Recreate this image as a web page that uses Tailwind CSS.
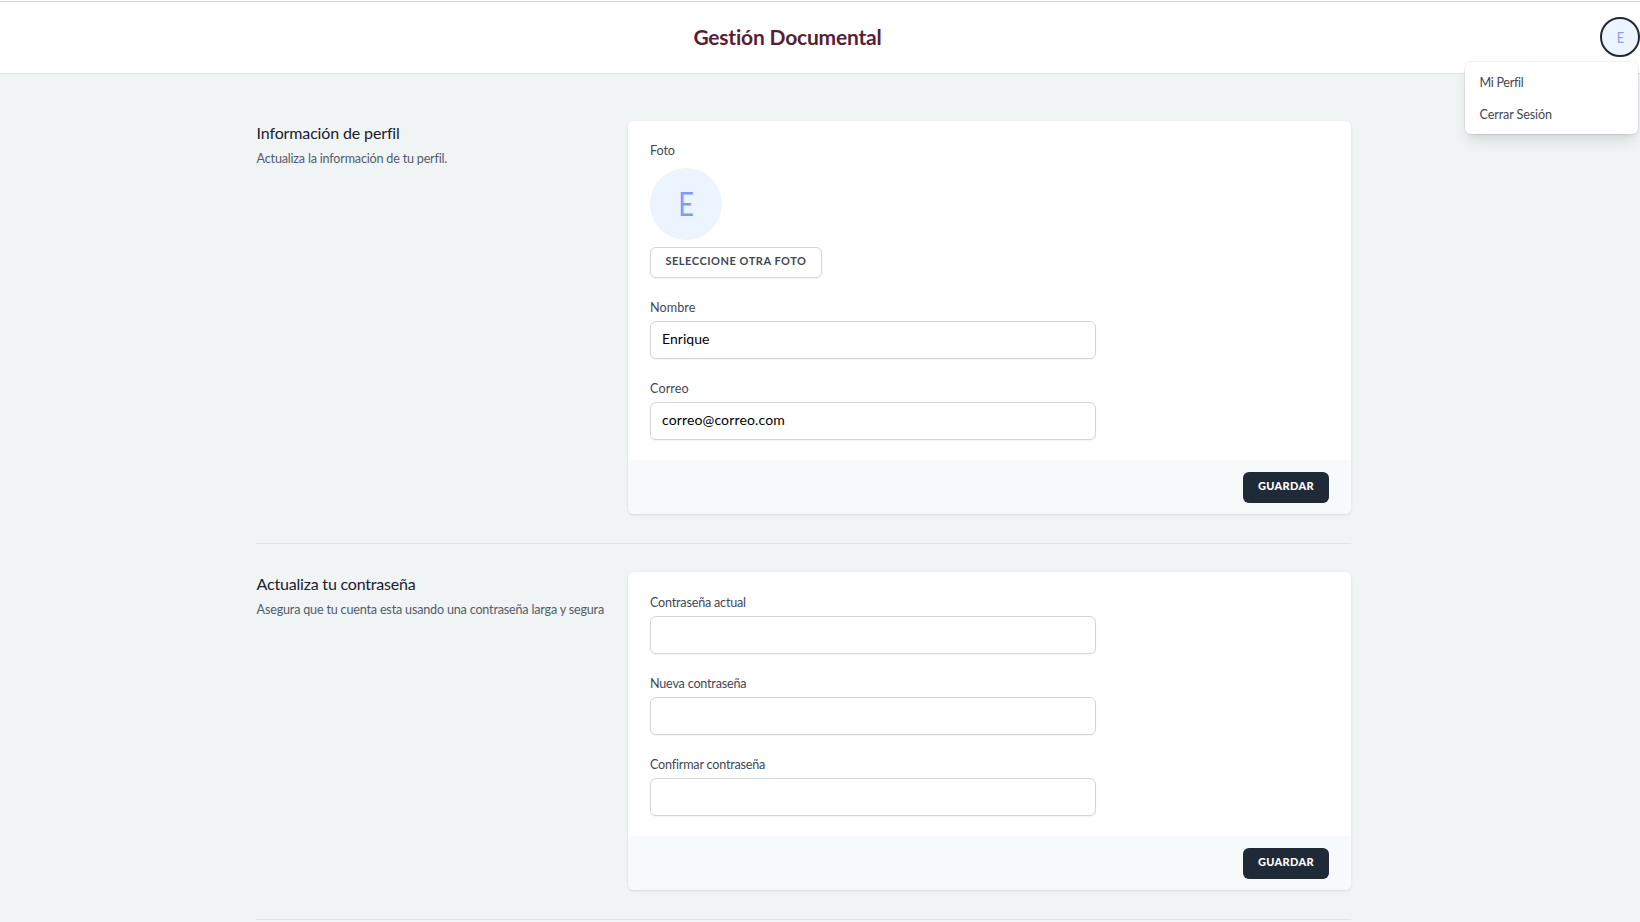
<!DOCTYPE html>
<html lang="es">
<head>
<meta charset="utf-8">
<title>Gestión Documental</title>
<script src="https://cdn.jsdelivr.net/npm/@tailwindcss/browser@4"></script>
</head>
<body class="h-[922px] overflow-hidden bg-[#f0f4f5] font-['Lato',sans-serif] text-[12.6px] leading-[18px] tracking-[-0.2px] text-[#3f4855]">
<div class="h-px bg-white"></div>
<header class="relative flex h-[73px] items-center border-y border-t-[#d5d7d8] border-b-[#dfe3e5] bg-white">
  <h1 class="mr-[25px] flex-1 -translate-y-px text-center text-[21px] leading-7 font-bold tracking-[-0.2px] text-[#561f38]">Gestión Documental</h1>
  <button class="mb-[2px] flex size-10 items-center justify-center rounded-full border-2 border-[#1f2937] bg-[#ebf4ff] text-[15px] text-[#8f9cf5]"><span class="scale-x-85">E</span></button>
  <nav class="absolute top-[60px] right-[2px] z-10 flex h-[72px] w-[173px] flex-col rounded-md bg-white pt-[5px] shadow-lg ring-1 ring-black/5">
    <a class="block px-[14.5px] pt-[7px] pb-[7px] tracking-[-0.3px]">Mi Perfil</a>
    <a class="block px-[14.5px] pt-[7px] pb-[7px] tracking-[-0.12px]">Cerrar Sesión</a>
  </nav>
</header>

<main class="ml-64 w-[1095px] pt-[47px]">
  <section class="grid grid-cols-[350px_723px] gap-[22px]">
    <div class="pl-[0.6px]">
      <h3 class="text-[16px] leading-6 tracking-[-0.14px] text-[#1a202c]">Información de perfil</h3>
      <p class="mt-[5px] whitespace-nowrap text-[#535d69]">Actualiza la información de tu perfil.</p>
    </div>
    <form class="overflow-hidden rounded-md bg-white shadow-sm">
      <div class="px-[22px] pt-[21px] pb-5">
        <label class="block tracking-[-0.1px]">Foto</label>
        <div class="mt-2 flex size-[72px] items-center justify-center rounded-full bg-[#ebf4ff] text-[32px] leading-8 text-[#7f9cf5]"><span class="scale-x-85">E</span></div>
        <button type="button" class="mt-[7px] flex h-[31px] w-[172px] items-center justify-center rounded-md border border-gray-300 bg-white pb-[3px] text-[11px] font-bold tracking-[0.53px] shadow-xs">SELECCIONE OTRA FOTO</button>
        <label class="mt-[21px] block tracking-[0.1px]">Nombre</label>
        <input class="mt-1 block h-[38px] w-[446px] rounded-md border border-gray-300 bg-white px-[11px] pb-[3px] text-[14px] tracking-[0.05px] text-black shadow-xs" value="Enrique">
        <label class="mt-[21px] block tracking-[0.1px]">Correo</label>
        <input class="mt-1 block h-[38px] w-[446px] rounded-md border border-gray-300 bg-white px-[11px] pb-[3px] text-[14px] tracking-[0.14px] text-black shadow-xs" value="correo@correo.com">
      </div>
      <div class="flex h-[54px] justify-end bg-[#f7fafb] px-[22px] pt-3">
        <button type="button" class="flex h-[31px] w-[86px] items-center justify-center rounded-md bg-[#1f2937] pb-[3px] text-[11px] font-black tracking-[0.3px] text-white">GUARDAR</button>
      </div>
    </form>
  </section>

  <hr class="mt-[29px] mb-7 border-t border-[#dfe3e5]">

  <section class="grid grid-cols-[350px_723px] gap-[22px]">
    <div class="pl-[0.6px]">
      <h3 class="text-[16px] leading-6 text-[#1a202c]">Actualiza tu contraseña</h3>
      <p class="mt-[5px] whitespace-nowrap text-[#535d69] tracking-[-0.19px]">Asegura que tu cuenta esta usando una contraseña larga y segura</p>
    </div>
    <form class="overflow-hidden rounded-md bg-white shadow-sm">
      <div class="px-[22px] pt-[22px] pb-5">
        <label class="block">Contraseña actual</label>
        <input type="password" class="mt-1 block h-[38px] w-[446px] rounded-md border border-gray-300 bg-white px-[11px] shadow-xs">
        <label class="mt-[21px] block">Nueva contraseña</label>
        <input type="password" class="mt-1 block h-[38px] w-[446px] rounded-md border border-gray-300 bg-white px-[11px] shadow-xs">
        <label class="mt-[21px] block">Confirmar contraseña</label>
        <input type="password" class="mt-1 block h-[38px] w-[446px] rounded-md border border-gray-300 bg-white px-[11px] shadow-xs">
      </div>
      <div class="flex h-[54px] justify-end bg-[#f7fafb] px-[22px] pt-3">
        <button type="button" class="flex h-[31px] w-[86px] items-center justify-center rounded-md bg-[#1f2937] pb-[3px] text-[11px] font-black tracking-[0.3px] text-white">GUARDAR</button>
      </div>
    </form>
  </section>

  <hr class="mt-[29px] border-t border-[#dfe3e5]">
</main>
</body>
</html>
